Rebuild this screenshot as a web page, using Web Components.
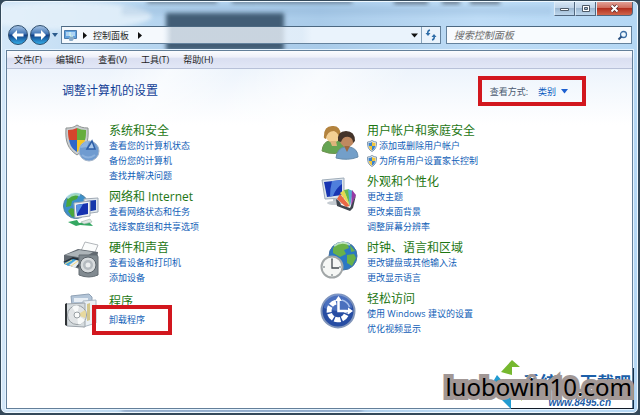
<!DOCTYPE html>
<html lang="zh-CN">
<head>
<meta charset="utf-8">
<title>控制面板</title>
<style>
html, body { margin: 0; height: 100%; background: #34495a; }
body {
  font-family: "Open Sans", "Noto Sans CJK SC", sans-serif;
  font-size: 9px;
  line-height: 15px;
  color: #1e1e1e;
  overflow: hidden;
}
</style>
</head>
<body>
<explorer-window>
  <window-buttons slot="title"></window-buttons>
  <nav-bar slot="nav" place="控制面板"></nav-bar>
  <menu-bar slot="menu" items="文件(F),编辑(E),查看(V),工具(T),帮助(H)"></menu-bar>
  <view-picker slot="tools"></view-picker>
  <span slot="heading">调整计算机的设置</span>
  <div slot="left">
    <panel-category icon="security" label="系统和安全">
      <task-link>查看您的计算机状态</task-link>
      <task-link>备份您的计算机</task-link>
      <task-link>查找并解决问题</task-link>
    </panel-category>
    <panel-category icon="network" label="网络和 Internet">
      <task-link>查看网络状态和任务</task-link>
      <task-link>选择家庭组和共享选项</task-link>
    </panel-category>
    <panel-category icon="hardware" label="硬件和声音">
      <task-link>查看设备和打印机</task-link>
      <task-link>添加设备</task-link>
    </panel-category>
    <panel-category icon="programs" label="程序" roomy>
      <task-link marked>卸载程序</task-link>
    </panel-category>
  </div>
  <div slot="right">
    <panel-category icon="users" label="用户帐户和家庭安全">
      <task-link shield>添加或删除用户帐户</task-link>
      <task-link shield>为所有用户设置家长控制</task-link>
    </panel-category>
    <panel-category icon="appearance" label="外观和个性化">
      <task-link>更改主题</task-link>
      <task-link>更改桌面背景</task-link>
      <task-link>调整屏幕分辨率</task-link>
    </panel-category>
    <panel-category icon="clock" label="时钟、语言和区域">
      <task-link>更改键盘或其他输入法</task-link>
      <task-link>更改显示语言</task-link>
    </panel-category>
    <panel-category icon="ease" label="轻松访问">
      <task-link>使用 Windows 建议的设置</task-link>
      <task-link>优化视频显示</task-link>
    </panel-category>
  </div>
</explorer-window>
<site-mark></site-mark>

<script>
// builds a class whose shadow root is cloned from the given markup
const shadowBase = (html) => {
  const template = document.createElement("template");
  template.innerHTML = html;
  return class extends HTMLElement {
    constructor() {
      super();
      this.attachShadow({ mode: "open" });
      this.shadowRoot.appendChild(template.content.cloneNode(true));
    }
  };
};

// aero frame and page
class ExplorerWindow extends shadowBase(`
<style>
:host {
  display: flex;
  flex-direction: column;
  box-sizing: border-box;
  min-height: 100vh;
  padding: 0 2px 2px 1px;
  position: relative;
}
.frame {
  flex: 1;
  display: flex;
  flex-direction: column;
  margin-top: 1px;
  padding: 0 4px 3px;
  border: 1px solid #eef8ff;
  border-radius: 5px;
  background: linear-gradient(90deg, #d3e7f8 0, #b7d6f0 22%, #a9cbe9 50%, #bedcf6 75%, #b4d7f4 100%);
  position: relative;
  overflow: hidden;
}
.glass { position: absolute; left: 0; top: 0; width: 100%; height: 50px; }
.bottom {
  position: absolute; left: 120px; bottom: 0; width: 240px; height: 4px;
  background: #8096b8; filter: blur(2px);
}
header { position: relative; height: 48px; }
.page {
  flex: 1;
  position: relative;
  display: flex;
  flex-direction: column;
  border: 1px solid #637f99;
  background: #fff;
  box-shadow: 0 0 0 1px #e4f3ff;
}
.content {
  flex: 1;
  background:
    linear-gradient(125deg, #ffffff00 12%, #ffffff90 19%, #ffffff00 27%, #ffffffa0 37%, #ffffff00 47%),
    linear-gradient(#edf4fc, #fff 56px);
}
.top {
  display: flex;
  justify-content: space-between;
  align-items: center;
  padding: 7px 46px 0 55px;
}
h1 { margin: 0; font-size: 12px; font-weight: normal; line-height: 18px; color: #123f96; }
.columns {
  display: grid;
  grid-template-columns: 1fr 1fr;
  padding: 18px 54px 20px 55px;
}
</style>
<div class="frame">
  <svg class="glass" viewBox="0 0 635 50" preserveAspectRatio="none" aria-hidden="true">
    <defs><filter id="soft" x="-20%" y="-60%" width="140%" height="220%"><feGaussianBlur stdDeviation="2"/></filter></defs>
    <ellipse cx="65" cy="14" rx="85" ry="14" fill="#e6f2fb" opacity=".8" filter="url(#soft)"/>
    <path d="M120 4h430v9H120z" fill="#7da3c8" opacity=".22" filter="url(#soft)"/>
    <path d="M145-3h70v4h-70zM230-3h120v4H230zM392-3h34v5h-34zM440-3h18v5h-18zM468-3h30v5h-30z" fill="#33404f" filter="url(#soft)" opacity=".65"/>
    <path d="M164 11h118v38H164z" fill="#435d76" filter="url(#soft)"/>
    <path d="M176 15h20" stroke="#7790a5" stroke-width="3" filter="url(#soft)"/>
  </svg>
  <div class="bottom"></div>
  <header><slot name="title"></slot><slot name="nav"></slot></header>
  <div class="page">
    <slot name="menu"></slot>
    <div class="content">
      <div class="top">
        <h1><slot name="heading"></slot></h1>
        <slot name="tools"></slot>
      </div>
      <div class="columns"><slot name="left"></slot><slot name="right"></slot></div>
    </div>
  </div>
</div>
`) {}
customElements.define("explorer-window", ExplorerWindow);

class WindowButtons extends shadowBase(`
<style>
:host { display: flex; justify-content: flex-end; height: 24px; }
button {
  display: grid;
  place-items: center;
  box-sizing: border-box;
  width: 21px;
  height: 14px;
  padding: 0;
  border: 1px solid #51677f;
  border-top: 0;
  border-left-color: #dcebf8;
  background: linear-gradient(#d6e6f5, #bfd3e7 45%, #9db8d2 50%, #bdd6ec);
}
button:first-child { border-left-color: #51677f; border-radius: 0 0 0 4px; }
.close {
  width: 37px;
  border-radius: 0 0 4px 0;
  background: linear-gradient(#e2a095, #cf6b5b 45%, #b3301f 50%, #d0654b);
}
</style>
<button aria-label="最小化"><svg width="11" height="6"><path d="M1.500 2.500h8v2h-8z" fill="#fff" stroke="#4d5a68"/></svg></button>
<button aria-label="还原"><svg width="10" height="9"><path d="M1.500 1.500h7v6h-7z" fill="#fff" stroke="#4d5a68"/><path d="M3.500 3.500h3v2h-3z" fill="#9db8d2" stroke="#4d5a68"/></svg></button>
<button class="close" aria-label="关闭"><svg width="11" height="9"><path d="M2.500 1.500l6 6m0-6l-6 6" stroke="#54282a" stroke-width="3.500"/><path d="M2.500 1.500l6 6m0-6l-6 6" stroke="#fff" stroke-width="2"/></svg></button>
`) {}
customElements.define("window-buttons", WindowButtons);

class NavBar extends shadowBase(`
<style>
:host { display: flex; align-items: center; height: 18px; padding-right: 1px; }
button { display: grid; place-items: center; padding: 0; border: 0; background: none; }
.arrows { display: flex; align-items: center; margin: 0 2px 0 1px; }
.arrows svg { display: block; margin: -2px 0; }
.address, .search {
  display: flex;
  align-items: center;
  box-sizing: border-box;
  height: 18px;
  border: 1px solid #64829d;
  border-top-color: #4c6881;
  background: #f2f8fdd8;
}
.address { flex: 381; margin-right: 5px; min-width: 0; background: linear-gradient(90deg, #f5f9fd 100px, #eef5fcc8 110px, #eef5fcc8 240px, #eaf3fc 250px); }
.address .icon { margin: 0 6px 0 2px; }
.crumb { margin: 0 9px 0 6px; font: inherit; color: inherit; }
.space { flex: 1; }
.refresh { height: 16px; width: 19px; margin-left: 3px; border-left: 1px solid #87a3bb; }
.search { flex: 186; background: #f8fbfe; min-width: 0; }
input {
  flex: 1;
  min-width: 0;
  padding: 0 0 0 7px;
  border: 0;
  outline: 0;
  background: none;
  font: italic 10px/16px "Open Sans", "Noto Sans CJK SC", sans-serif;
}
input::placeholder { color: #6d6d6d; opacity: 1; }
.search button { width: 18px; }
</style>
<div class="arrows">
  <button aria-label="后退"><svg width="22" height="22" viewBox="0 0 22 22">
    <defs><linearGradient id="b" x2="0" y2="1"><stop stop-color="#a9c6e6"/><stop offset=".45" stop-color="#3e73b4"/><stop offset=".5" stop-color="#123f86"/><stop offset="1" stop-color="#35b3ee"/></linearGradient></defs>
    <circle cx="11" cy="11" r="9.500" fill="url(#b)" stroke="#31506f"/><path d="M5 11l5-5v3.500h6.500v3H10V16z" fill="#fff"/></svg></button>
  <button aria-label="前进"><svg width="22" height="22" viewBox="0 0 22 22">
    <defs><linearGradient id="f" x2="0" y2="1"><stop stop-color="#a9c6e6"/><stop offset=".45" stop-color="#3e73b4"/><stop offset=".5" stop-color="#123f86"/><stop offset="1" stop-color="#35b3ee"/></linearGradient></defs>
    <circle cx="11" cy="11" r="9.500" fill="url(#f)" stroke="#31506f"/><path d="M17 11l-5-5v3.500H5.500v3H12V16z" fill="#fff"/></svg></button>
  <button aria-label="最近的页"><svg width="8" height="6"><path d="M1 1h6L4 5z" fill="#2c5b8c"/></svg></button>
</div>
<div class="address">
  <svg class="icon" width="13" height="13" viewBox="0 0 13 13"><path d="M.5 1.500h12v8H.5z" fill="#62a3de" stroke="#4a7cae"/><path d="M4 3h7v4H4z" fill="#aed4f4"/><path d="M2 4h2M2 6h2" stroke="#fff"/><path d="M4.500 9l3-3 3 3-2 3h-3z" fill="#87a9c6"/><path d="M6 3v4h3" stroke="#dfe" fill="none"/></svg>
  <svg width="4" height="7"><path d="M0 0l4 3.500-4 3.500z" fill="#111"/></svg>
  <button class="crumb"></button>
  <svg width="4" height="7"><path d="M0 0l4 3.500-4 3.500z" fill="#111"/></svg>
  <span class="space"></span>
  <button aria-label="历史"><svg width="7" height="5"><path d="M0 .5h7L3.500 4.500z" fill="#111"/></svg></button>
  <button class="refresh" aria-label="刷新"><svg width="12" height="12" viewBox="0 0 12 12"><path d="M5 1C2.500 1.500 2.500 3 2.700 5" fill="none" stroke="#2f6da8" stroke-width="1.500"/><path d="M.5 4h5L3 7z" fill="#2f6da8"/><path d="M7 11c2.500-.5 2.500-2 2.300-4" fill="none" stroke="#2f6da8" stroke-width="1.500"/><path d="M6.500 8h5L9 5z" fill="#2f6da8"/></svg></button>
</div>
<div class="search">
  <input type="search" placeholder="搜索控制面板" aria-label="搜索控制面板">
  <button aria-label="搜索"><svg width="11" height="11" viewBox="0 0 11 11"><circle cx="6.500" cy="4.500" r="3" fill="#eef8ff" stroke="#3d6fa5" stroke-width="1.300"/><path d="M4.500 6.500L1.500 9.500" stroke="#2c5180" stroke-width="2"/></svg></button>
</div>
`) {
  connectedCallback() {
    this.shadowRoot.querySelector(".crumb").textContent = this.getAttribute("place");
  }
}
customElements.define("nav-bar", NavBar);

class MenuBar extends shadowBase(`
<style>
:host {
  display: flex;
  gap: 14px;
  height: 17px;
  padding-left: 7px;
  background: linear-gradient(#fbfcfe, #eef0f9 35%, #dadff1 45%, #e2e7f6);
  border-bottom: 1px solid #b8c1d8;
}
button { padding: 0; border: 0; background: none; font: inherit; color: inherit; }
</style>
`) {
  connectedCallback() {
    this.getAttribute("items").split(",").forEach((item) => {
      const button = document.createElement("button");
      button.textContent = item;
      this.shadowRoot.appendChild(button);
    });
  }
}
customElements.define("menu-bar", MenuBar);

class ViewPicker extends shadowBase(`
<style>
:host {
  display: flex;
  align-items: center;
  box-sizing: border-box;
  height: 30px;
  padding: 0 14px 0 8px;
  border: 4px solid #d2171e;
  gap: 10px;
}
label { color: #4a5a70; }
select {
  appearance: none;
  width: 30px;
  padding: 0;
  border: 0;
  font: inherit;
  color: #0b5cc0;
  background: conic-gradient(from -37deg at 50% 100%, #0000 0) no-repeat;
}
.picker { display: grid; align-items: center; }
.picker > * { grid-area: 1 / 1; }
.picker svg { justify-self: end; pointer-events: none; }
</style>
<label for="view">查看方式:</label>
<div class="picker">
  <select id="view"><option>类别</option><option>大图标</option><option>小图标</option></select>
  <svg width="7" height="5"><path d="M0 0h7L3.500 4.500z" fill="#1c5fd0"/></svg>
</div>
`) {}
customElements.define("view-picker", ViewPicker);

// 40x40 drawings, looked up by the icon attribute of a category
const icons = {
  security: `
    <path d="M4 4c6 0 8-1 11-3 3 2 6 3 11 3 1 14-2 21-11 27C6 25 3 18 4 4z" fill="#c9cdcf" stroke="#8e9392"/>
    <path d="M6 6c4 0 6-1 9-2v12H7C6 12 6 9 6 6z" fill="#d5452c"/><path d="M15 4c3 1 5 2 9 2 0 4 0 7-1 10h-8z" fill="#66ad3d"/>
    <path d="M7 16h8v12c-5-3-7-7-8-12z" fill="#2d66c9"/><path d="M15 16h8c-1 5-3 9-8 12z" fill="#f3c526"/>
    <circle cx="27" cy="27" r="10" fill="#6f9bd0" stroke="#a5b6cb"/><path d="M18 24q3-6 9-7l-2 6z" fill="#8fb4df"/>
    <path d="M25 25l5-8 3 8z" fill="#a9c8ec" stroke="#2f5fa8" stroke-width="1.500"/><path d="M20 31q6 5 13 0" stroke="#8bb0dc" fill="none" stroke-width="2"/>`,
  network: `
    <circle cx="14" cy="16" r="12.500" fill="#3d8fc9" stroke="#52829f"/><path d="M5 9q6-7 12-5l-2 5-5 2-1 5-5 1zM9 18l6 2-1 6-4 1-4-6z" fill="#49a63d"/><path d="M5 8q6-6 13-3" stroke="#c5eff5" stroke-width="3" fill="none" opacity=".7"/>
    <path d="M22 9l14-1v14l-14 2z" fill="#e2e9ee" stroke="#9fa9b4"/><path d="M24 11l10-1v10l-10 2z" fill="#1638ab"/>
    <path d="M12 13l16-2v15l-15 2z" fill="#eef2f4" stroke="#9fa9b4"/><path d="M14 15l12-2v11l-11 2z" fill="#1532b0"/><path d="M14 15l7-1-6 10z" fill="#5b93e3"/>
    <path d="M6 32l9-2 2 3 10-1 4 4-13-1-4 1z" fill="#35a862"/><path d="M19 32l9-3 2 3-8 2z" fill="#dfe7e4" stroke="#9db3a9" stroke-width=".6"/>`,
  hardware: `
    <path d="M19 10l4-9 13 3-5 12z" fill="#fbfcfc" stroke="#b2b6ba"/><path d="M2 14l14-6 20 3-2 15-13 3L2 23z" fill="#616970"/><path d="M3 14l14-5 14 2-9 6z" fill="#adb4b8"/>
    <path d="M1 21l10-5 12 3-6 7z" fill="#27313b"/><path d="M2 22l9-4 4 1-9 6z" fill="#43a5dc"/><path d="M7 24l7-5 5 1-6 7z" fill="#e6edf0"/><path d="M3 23l7-4M9 25l7-5" stroke="#f6d77b"/>
    <path d="M17 14h17q2 0 2 2v18q-9 4-19 0z" fill="#818a90" stroke="#646d73"/><circle cx="26" cy="24" r="8" fill="#d8dcde" stroke="#596167"/><circle cx="26" cy="24" r="5" fill="#b5bbc0"/><circle cx="26" cy="24" r="2.500" fill="#eceeef"/>`,
  programs: `
    <path d="M9 4l18-2 3 3v18H11z" fill="#b3c5d8" stroke="#8fa1b5"/><path d="M12 6h14v4H12z" fill="#e7eef5"/><path d="M21 9l13-1v23l-13 4z" fill="#eaf0f5" stroke="#abb8c4"/>
    <path d="M4 12l19-1v24L5 34z" fill="#d5dbde" stroke="#9ca4ab"/><path d="M3 12l2-1v23l-2-1z" fill="#2f3336"/>
    <circle cx="15" cy="23" r="9.500" fill="#e1e4e6" stroke="#979ea3"/><path d="M15 23l-5-8q4-3 7-1zM15 23l8 5q-3 5-7 4z" fill="#f8fafa"/><path d="M15 23l8-5q2 4 0 8z" fill="#e8d99e"/><circle cx="15" cy="23" r="3" fill="#f9fafa" stroke="#9aa1a5"/>
    <path d="M25 12v17l3-1V11z" fill="#d3c78c"/>`,
  users: `
    <path d="M2 27q1-9 7-10l8-1q7 3 7 9-7 8-22 2z" fill="#65a452" stroke="#6d9250"/><circle cx="13" cy="11" r="7.500" fill="#f2cf93"/><path d="M4 12Q4 2 12 2q8-1 9 9l-2 4q0-6-5-8-7 0-8 8-3-1-2-3z" fill="#b3833e"/><path d="M10 17h6l1 5h-5z" fill="#dcb47b"/>
    <path d="M16 34q1-10 9-11h5q8 2 8 10-10 4-22 1z" fill="#739fc9" stroke="#668bab"/><circle cx="27" cy="16" r="7" fill="#bf8960"/><path d="M18 17q-1-10 8-10 9 0 9 10l-2 2q0-5-4-6-6-1-8 5z" fill="#44342a"/><path d="M24 22h6l-3 6z" fill="#9d6840"/>`,
  appearance: `
    <path d="M2 5l22-2v20L5 24z" fill="#dce4eb" stroke="#9facb9"/><path d="M4 7l18-2v15L7 22z" fill="#1835b2"/><path d="M12 6l10-1v4q-6 4-9 12l-3 .5q0-8 2-15.500z" fill="#4f7fdc"/><path d="M13 24l6-1 1 5h-7z" fill="#bac3cc"/><ellipse cx="15" cy="28" rx="8" ry="2" fill="#c6ccd2"/>
    <path d="M17 24l3-5 10 12-4 1z" fill="#ea6845"/><path d="M20 18l4-3 6 16z" fill="#e7d850"/><path d="M24 15l5-1 1 17z" fill="#69ba4a"/><path d="M28 14l5 2-3 16z" fill="#57acd1"/><path d="M32 15l4 5-5 13z" fill="#963aa5"/><path d="M16 24q4 2 5 6l9 3 6-13-3 13-3 3-13-5z" fill="#40464f"/>`,
  clock: `
    <circle cx="23" cy="15" r="14" fill="#2b78c3" stroke="#4471a0"/><path d="M13 7q6-7 14-5l2 5-5 2 2 4-6 3-7-4zM27 14l7-1 2 4-4 8-5-3zM30 4l5 6-4 1z" fill="#69b149"/><path d="M14 5q8-6 16-1" stroke="#d4f2d3" stroke-width="2" fill="none" opacity=".8"/>
    <circle cx="12" cy="26" r="10.500" fill="#f6f7f5" stroke="#a1a6a7" stroke-width="2"/><path d="M12 18v9h7" fill="none" stroke="#454c50" stroke-width="1.300"/><path d="M12 17v2M12 33v2M3 26h2M19 26h2" stroke="#657075"/>`,
  ease: `
    <circle cx="18" cy="19" r="16.500" fill="#274da3" stroke="#8195ba" stroke-width="2"/><path d="M4 16a14 14 0 0 1 28 0q-14 6-28 0z" fill="#789be0" opacity=".45"/>
    <path d="M16 10.100a9 9 0 1 0 10.900 10.500" fill="none" stroke="#fff" stroke-width="5" stroke-dasharray="6 1.500"/>
    <path d="M18.500 6v13H31" stroke="#fff" stroke-width="2.500" fill="none"/><path d="M15 9l3.500-5L22 9zM28 15.500l5 3.500-5 3.500z" fill="#fff"/>
    <path d="M22 8q6 2 7.500 7" stroke="#a9c0ec" stroke-width="1.500" fill="none"/>`,
};

class PanelCategory extends shadowBase(`
<style>
:host { display: flex; gap: 7px; margin-bottom: 7px; }
:host([roomy]) h2 { padding-top: 3px; }
svg { flex: none; width: 40px; height: 40px; }
h2 { margin: 0; font-size: 12px; font-weight: normal; line-height: 14px; }
a { color: #1d7613; text-decoration: none; }
</style>
<svg viewBox="0 0 40 40" aria-hidden="true"></svg>
<div><h2><a href="#"></a></h2><slot></slot></div>
`) {
  connectedCallback() {
    this.shadowRoot.querySelector("svg").innerHTML = icons[this.getAttribute("icon")];
    this.shadowRoot.querySelector("a").textContent = this.getAttribute("label");
  }
}
customElements.define("panel-category", PanelCategory);

class TaskLink extends shadowBase(`
<style>
:host { display: flex; align-items: center; gap: 2px; height: 15px; position: relative; }
a { color: #1160b7; text-decoration: none; white-space: nowrap; }
svg { display: none; }
:host([shield]) svg { display: block; }
:host([marked]) { height: 20px; }
/* red frame laid over the link */
:host([marked])::after {
  content: "";
  position: absolute;
  left: -17px;
  top: -4px;
  box-sizing: border-box;
  width: 80px;
  height: 30px;
  border: 4px solid #d2171e;
  pointer-events: none;
}
</style>
<svg width="10" height="12" viewBox="0 0 10 12"><path d="M.5 2Q3 2 5 .5 7 2 9.500 2 10 9 5 11.500 0 9 .5 2z" fill="#e8eef2" stroke="#8298ad"/><path d="M1.500 3q2 0 3.500-1v4H1.700zM5 6h3.300Q8 9 5 10.500z" fill="#3b82cd"/><path d="M5 2q1.500 1 3.500 1L8.300 6H5zM1.700 6H5v4.500Q2 9 1.700 6z" fill="#eec53c"/></svg>
<a href="#"><slot></slot></a>
`) {}
customElements.define("task-link", TaskLink);

// watermark over the lower right corner
class SiteMark extends shadowBase(`
<style>
:host { position: absolute; right: 0; bottom: 0; width: 200px; height: 60px; pointer-events: none; }
svg { position: absolute; left: 48px; top: 5px; }
.under {
  position: absolute; left: 83px; right: 9px; top: 18px;
  display: flex; justify-content: space-between;
  font-size: 17px; line-height: 20px; font-weight: bold; color: #1b5fa9;
}
.url {
  position: absolute; right: 29px; bottom: 6px;
  font: italic bold 10px/12px "Liberation Sans", sans-serif; color: #1d5ba6;
}
.name {
  position: absolute; right: 8px; top: 16px;
  font: 24px/32px "Noto Sans", sans-serif; color: #000;
  -webkit-text-stroke: 8px #a19795; paint-order: stroke fill;
}
.line { position: absolute; left: 71px; right: 6px; bottom: 6px; height: 1px; background: #111b29; }
.edge { position: absolute; right: 6px; top: 13px; bottom: 6px; width: 1px; background: #16314a; }
</style>
<svg width="40" height="50" viewBox="0 0 40 50"><path d="M13 12L24 0l8 7h-8v8z" fill="#76b82f"/><path d="M9 15l13 15H0z" fill="#219bd1"/><path d="M12 38l11-9v20z" fill="#219bd1"/><path d="M40 33l-7 8v-8z" fill="#98be2e"/></svg>
<div class="under"><span>系统</span><span>下载吧</span></div>
<div class="line"></div><div class="edge"></div>
<div class="url">www.8495.cn</div>
<div class="name">luobowin10.com</div>
`) {}
customElements.define("site-mark", SiteMark);
</script>
</body>
</html>
